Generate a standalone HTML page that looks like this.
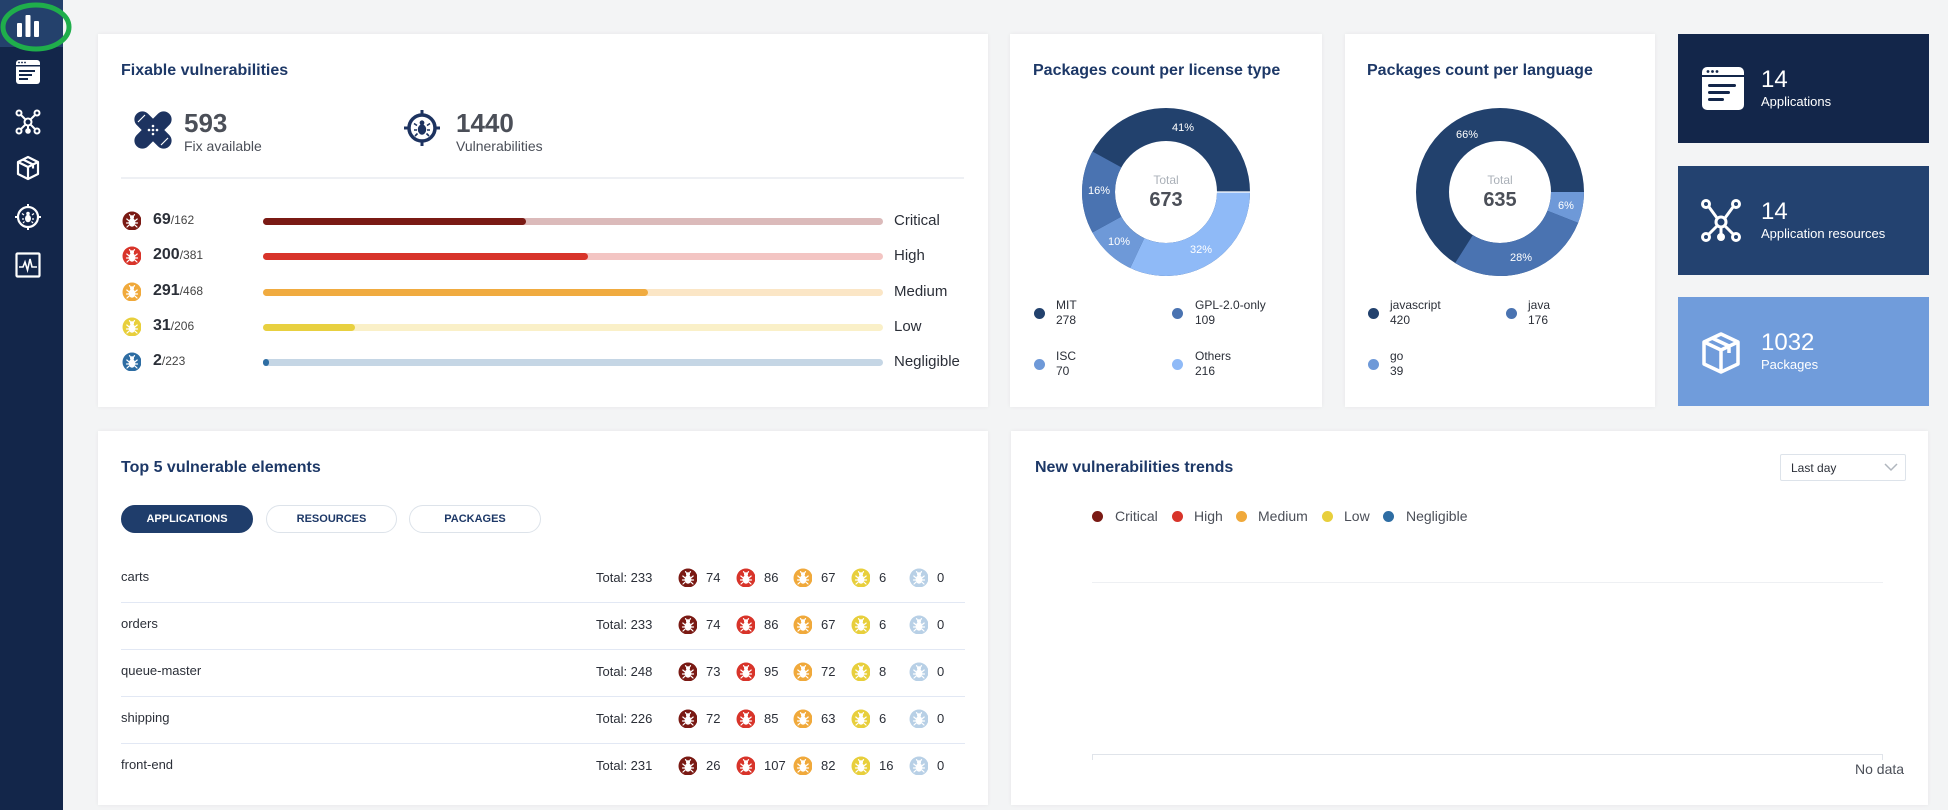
<!DOCTYPE html>
<html><head><meta charset="utf-8"><style>
*{box-sizing:border-box;margin:0;padding:0}
body{width:1948px;height:810px;background:#f3f4f5;font-family:"Liberation Sans",sans-serif;position:relative;overflow:hidden;color:#2b2f38}
.a{position:absolute}
.card{position:absolute;background:#fff;box-shadow:0 0 4px rgba(0,0,0,.06)}
.title{position:absolute;font-size:16px;font-weight:bold;color:#1d3867;white-space:nowrap}
.sev{position:absolute;width:19px;height:19px}
.bar{position:absolute;height:7px;border-radius:4px}
.lbl{position:absolute;font-size:15px;color:#2b2f38}
.num{position:absolute;font-size:16px;font-weight:bold;color:#2b2f38}
.num small{font-size:12px;font-weight:normal;color:#444}
.row{position:absolute;font-size:13px;color:#2b2f38}
.btn{position:absolute;height:28px;border-radius:14px;border:1px solid #dde3ea;font-size:11px;font-weight:bold;color:#1d3867;text-align:center;line-height:26px}
.dl{position:absolute;width:11px;height:11px;border-radius:50%}
.lt{position:absolute;font-size:12px;line-height:15px;color:#2b2f38}
.tile{position:absolute;left:1678px;width:251px;height:109px}
.tn{position:absolute;left:83px;top:32px;font-size:24px;color:#fff}
.tl{position:absolute;left:83px;top:60px;font-size:13px;color:#fff}
</style></head><body>
<svg width="0" height="0" style="position:absolute"><defs>
<g id="bug"><circle cx="10" cy="10" r="9.5" fill="currentColor"/>
<g fill="#fff"><ellipse cx="10" cy="11.5" rx="3.4" ry="4.2"/><circle cx="10" cy="6.3" r="2"/></g>
<g stroke="#fff" stroke-width="1.2" fill="none" stroke-linecap="round"><path d="M6.6 9.5 4.8 8M13.4 9.5 15.2 8M6.5 12H4.5M13.5 12h2M6.8 14.3 5 16M13.2 14.3 15 16M8.5 5 7.5 3.6M11.5 5l1-1.4"/></g></g>
</defs></svg>

<!-- sidebar -->
<div class="a" style="left:0;top:0;width:63px;height:810px;background:#13264a"></div>
<div class="a" style="left:0;top:0;width:63px;height:47px;background:#24416c"></div>
<svg class="a" style="left:0;top:0" width="76" height="56"><ellipse cx="36" cy="27" rx="33" ry="22" fill="none" stroke="#1fae4b" stroke-width="5"/></svg>
<svg class="a" style="left:15px;top:14px" width="26" height="24"><rect x="2" y="9" width="5" height="14" rx="1" fill="#fff"/><rect x="10.5" y="1" width="5" height="22" rx="1" fill="#fff"/><rect x="19" y="7" width="5" height="16" rx="1" fill="#fff"/></svg>
<svg class="a" style="left:15px;top:59px" width="26" height="26"><rect x="1" y="1" width="24" height="24" rx="3" fill="#fff"/><rect x="1" y="6" width="24" height="1.5" fill="#13264a"/><circle cx="4" cy="3.5" r=".9" fill="#13264a"/><circle cx="7" cy="3.5" r=".9" fill="#13264a"/><circle cx="10" cy="3.5" r=".9" fill="#13264a"/><rect x="4" y="11" width="16" height="2" fill="#13264a"/><rect x="4" y="15" width="13" height="2" fill="#13264a"/><rect x="4" y="19" width="9" height="2" fill="#13264a"/></svg>
<svg class="a" style="left:15px;top:109px" width="26" height="26" fill="none" stroke="#fff" stroke-width="2"><circle cx="13" cy="13" r="3.5"/><circle cx="4" cy="4" r="2.5"/><circle cx="22" cy="4" r="2.5"/><circle cx="4" cy="22" r="2.5"/><circle cx="22" cy="22" r="2.5"/><circle cx="13" cy="22" r="1.8" fill="#fff"/><path d="M6 6l4.5 4.5M20 6l-4.5 4.5M6 20l4.5-4.5M20 20l-4.5-4.5M13 16.5v4"/></svg>
<svg class="a" style="left:16px;top:155px" width="24" height="26" fill="none" stroke="#fff" stroke-width="2.2" stroke-linejoin="round"><path d="M12 2 22 7v12l-10 5-10-5V7z"/><path d="M2 7l10 5 10-5M12 12v12M7 4.5l10 5v4"/></svg>
<svg class="a" style="left:15px;top:204px" width="26" height="26"><circle cx="13" cy="13" r="10" fill="none" stroke="#fff" stroke-width="2.2"/><path d="M13 0v4M13 22v4M0 13h4M22 13h4" stroke="#fff" stroke-width="2"/><ellipse cx="13" cy="14.5" rx="3" ry="3.8" fill="#fff"/><circle cx="13" cy="9.5" r="1.8" fill="#fff"/><path d="M9 11l-2-1.5M17 11l2-1.5M9 15H7M17 15h2M9.5 17.5 8 19M16.5 17.5 18 19" stroke="#fff" stroke-width="1.2"/></svg>
<svg class="a" style="left:15px;top:252px" width="26" height="26" fill="none" stroke="#fff" stroke-width="2.2"><rect x="1.5" y="1.5" width="23" height="23" rx="1"/><path d="M4 15h4l2-5 2.5 8 2.5-11 2 8h5" stroke-width="1.6"/></svg>

<!-- card 1 -->
<div class="card" style="left:98px;top:34px;width:890px;height:373px"></div>
<div class="title" style="left:121px;top:62px">Fixable vulnerabilities</div>
<svg class="a" style="left:132px;top:109px" width="42" height="42"><g transform="rotate(45 21 21)" fill="#1d3360"><rect x="13" y="-2" width="16" height="46" rx="8"/><rect x="-2" y="13" width="46" height="16" rx="8"/></g><g stroke="#fff" stroke-width="1.2"><path d="M6 13 13 6M29 36 36 29"/></g><g fill="#fff"><circle cx="21" cy="17" r="1.3"/><circle cx="21" cy="25" r="1.3"/><circle cx="17" cy="21" r="1.3"/><circle cx="25" cy="21" r="1.3"/><circle cx="21" cy="21" r="1.3"/></g></svg>
<div class="a" style="left:184px;top:108px;font-size:26px;font-weight:bold;color:#4b4f58">593</div>
<div class="a" style="left:184px;top:138px;font-size:14px;color:#4b4f58">Fix available</div>
<svg class="a" style="left:404px;top:110px" width="36" height="36"><circle cx="18" cy="18" r="13" fill="none" stroke="#1d3360" stroke-width="3.5"/><path d="M18 0v6M18 30v6M0 18h6M30 18h6" stroke="#1d3360" stroke-width="3"/><ellipse cx="18" cy="19.5" rx="4.2" ry="5.2" fill="#1d3360"/><circle cx="18" cy="12.8" r="2.4" fill="#1d3360"/><path d="M13 15.5l-3-2M23 15.5l3-2M13 20h-3M23 20h3M13.5 23.5 11 26M22.5 23.5 25 26" stroke="#1d3360" stroke-width="1.6"/></svg>
<div class="a" style="left:456px;top:108px;font-size:26px;font-weight:bold;color:#4b4f58">1440</div>
<div class="a" style="left:456px;top:138px;font-size:14px;color:#4b4f58">Vulnerabilities</div>
<div class="a" style="left:121px;top:177px;width:843px;height:2px;background:#eef0f4"></div>

<svg class="sev" style="left:122px;top:211px;color:#7a1a14"><use href="#bug"/></svg>
<div class="num" style="left:153px;top:211px">69<small>/162</small></div>
<div class="bar" style="left:263px;top:218px;width:620px;background:#dbbaba"></div>
<div class="bar" style="left:263px;top:218px;width:263px;background:#7a1a14"></div>
<div class="lbl" style="left:894px;top:212px">Critical</div>

<svg class="sev" style="left:122px;top:246px;color:#d8342a"><use href="#bug"/></svg>
<div class="num" style="left:153px;top:246px">200<small>/381</small></div>
<div class="bar" style="left:263px;top:253px;width:620px;background:#f3c5c3"></div>
<div class="bar" style="left:263px;top:253px;width:325px;background:#d8342a"></div>
<div class="lbl" style="left:894px;top:247px">High</div>

<svg class="sev" style="left:122px;top:282px;color:#f0a93b"><use href="#bug"/></svg>
<div class="num" style="left:153px;top:282px">291<small>/468</small></div>
<div class="bar" style="left:263px;top:289px;width:620px;background:#fbe6c6"></div>
<div class="bar" style="left:263px;top:289px;width:385px;background:#f0ab40"></div>
<div class="lbl" style="left:894px;top:283px">Medium</div>

<svg class="sev" style="left:122px;top:317px;color:#e8cf3c"><use href="#bug"/></svg>
<div class="num" style="left:153px;top:317px">31<small>/206</small></div>
<div class="bar" style="left:263px;top:324px;width:620px;background:#faf0c8"></div>
<div class="bar" style="left:263px;top:324px;width:92px;background:#e8d040"></div>
<div class="lbl" style="left:894px;top:318px">Low</div>

<svg class="sev" style="left:122px;top:352px;color:#2e6da3"><use href="#bug"/></svg>
<div class="num" style="left:153px;top:352px">2<small>/223</small></div>
<div class="bar" style="left:263px;top:359px;width:620px;background:#c5d6e5"></div>
<div class="bar" style="left:263px;top:359px;width:6px;background:#2e6da3"></div>
<div class="lbl" style="left:894px;top:353px">Negligible</div>

<!-- card 2 -->
<div class="card" style="left:1010px;top:34px;width:312px;height:373px"></div>
<div class="title" style="left:1033px;top:62px">Packages count per license type</div>
<svg class="a" style="left:1066px;top:92px" width="200" height="200">
<g transform="translate(100 100)" fill="none" stroke-width="33">
<circle r="67.5" stroke="#22416d"/>
<circle r="67.5" stroke="#8fbaf7" stroke-dasharray="135.7 1000"/>
<circle r="67.5" stroke="#6e99d8" stroke-dasharray="42.4 1000" transform="rotate(115.2)"/>
<circle r="67.5" stroke="#4a73b1" stroke-dasharray="67.9 1000" transform="rotate(151.2)"/>
</g>
<g stroke="#fff" stroke-width="1.2"><path d="M184 100H150M100 100"/></g>
<g font-size="11" fill="#fff" text-anchor="middle" font-family="Liberation Sans"><text x="117" y="39">41%</text><text x="33" y="102">16%</text><text x="53" y="153">10%</text><text x="135" y="161">32%</text></g>
<text x="100" y="92" font-size="12" fill="#aab0b8" text-anchor="middle" font-family="Liberation Sans">Total</text>
<text x="100" y="114" font-size="20" font-weight="bold" fill="#4b4f58" text-anchor="middle" font-family="Liberation Sans">673</text>
</svg>
<div class="dl" style="left:1034px;top:308px;background:#22416d"></div><div class="lt" style="left:1056px;top:298px">MIT<br>278</div>
<div class="dl" style="left:1172px;top:308px;background:#4a73b1"></div><div class="lt" style="left:1195px;top:298px">GPL-2.0-only<br>109</div>
<div class="dl" style="left:1034px;top:359px;background:#6e99d8"></div><div class="lt" style="left:1056px;top:349px">ISC<br>70</div>
<div class="dl" style="left:1172px;top:359px;background:#8fbaf7"></div><div class="lt" style="left:1195px;top:349px">Others<br>216</div>

<!-- card 3 -->
<div class="card" style="left:1345px;top:34px;width:310px;height:373px"></div>
<div class="title" style="left:1367px;top:62px">Packages count per language</div>
<svg class="a" style="left:1400px;top:92px" width="200" height="200">
<g transform="translate(100 100)" fill="none" stroke-width="33">
<circle r="67.5" stroke="#22416d"/>
<circle r="67.5" stroke="#6e99d8" stroke-dasharray="25.4 1000"/>
<circle r="67.5" stroke="#4a73b1" stroke-dasharray="118.5 1000" transform="rotate(21.6)"/>
</g>
<g font-size="11" fill="#fff" text-anchor="middle" font-family="Liberation Sans"><text x="67" y="46">66%</text><text x="166" y="117">6%</text><text x="121" y="169">28%</text></g>
<text x="100" y="92" font-size="12" fill="#aab0b8" text-anchor="middle" font-family="Liberation Sans">Total</text>
<text x="100" y="114" font-size="20" font-weight="bold" fill="#4b4f58" text-anchor="middle" font-family="Liberation Sans">635</text>
</svg>
<div class="dl" style="left:1368px;top:308px;background:#22416d"></div><div class="lt" style="left:1390px;top:298px">javascript<br>420</div>
<div class="dl" style="left:1506px;top:308px;background:#4a73b1"></div><div class="lt" style="left:1528px;top:298px">java<br>176</div>
<div class="dl" style="left:1368px;top:359px;background:#6e99d8"></div><div class="lt" style="left:1390px;top:349px">go<br>39</div>

<!-- tiles -->
<div class="tile" style="top:34px;background:#13264a">
<svg class="a" style="left:24px;top:33px" width="42" height="43"><rect x="0" y="0" width="42" height="43" rx="5" fill="#fff"/><rect x="0" y="8" width="42" height="2" fill="#13264a"/><circle cx="6" cy="4.5" r="1.4" fill="#13264a"/><circle cx="10.5" cy="4.5" r="1.4" fill="#13264a"/><circle cx="15" cy="4.5" r="1.4" fill="#13264a"/><rect x="6" y="17" width="28" height="3" rx="1.5" fill="#13264a"/><rect x="6" y="24" width="22" height="3" rx="1.5" fill="#13264a"/><rect x="6" y="31" width="16" height="3" rx="1.5" fill="#13264a"/></svg>
<div class="tn">14</div><div class="tl">Applications</div></div>
<div class="tile" style="top:166px;background:#234270">
<svg class="a" style="left:23px;top:32px" width="40" height="44" fill="none" stroke="#fff" stroke-width="3"><circle cx="20" cy="24" r="5"/><circle cx="5" cy="6" r="3.5"/><circle cx="35" cy="6" r="3.5"/><circle cx="5" cy="39" r="3.5"/><circle cx="35" cy="39" r="3.5"/><circle cx="20" cy="39" r="2.5" fill="#fff"/><path d="M8 9l8 11M32 9l-8 11M8 36l8-8M32 36l-8-8M20 29v8"/></svg>
<div class="tn">14</div><div class="tl">Application resources</div></div>
<div class="tile" style="top:297px;background:#709cdb">
<svg class="a" style="left:23px;top:34px" width="40" height="44" fill="none" stroke="#fff" stroke-width="3.5" stroke-linejoin="round"><path d="M20 3 37 11v22L20 41 3 33V11z"/><path d="M3 11l17 8 17-8M20 19v22M11 7l17 8v7"/></svg>
<div class="tn">1032</div><div class="tl">Packages</div></div>

<!-- card 4 -->
<div class="card" style="left:98px;top:431px;width:890px;height:374px"></div>
<div class="title" style="left:121px;top:459px">Top 5 vulnerable elements</div>
<div class="btn" style="left:121px;top:505px;width:132px;background:#1f3d6b;border-color:#1f3d6b;color:#fff">APPLICATIONS</div>
<div class="btn" style="left:266px;top:505px;width:131px">RESOURCES</div>
<div class="btn" style="left:409px;top:505px;width:132px">PACKAGES</div>

<div class="row" style="left:121px;top:569px">carts</div>
<div class="row" style="left:121px;top:616px">orders</div>
<div class="row" style="left:121px;top:663px">queue-master</div>
<div class="row" style="left:121px;top:710px">shipping</div>
<div class="row" style="left:121px;top:757px">front-end</div>
<div class="a" style="left:121px;top:602px;width:844px;height:1px;background:#e2e8f4"></div>
<div class="a" style="left:121px;top:649px;width:844px;height:1px;background:#e2e8f4"></div>
<div class="a" style="left:121px;top:696px;width:844px;height:1px;background:#e2e8f4"></div>
<div class="a" style="left:121px;top:743px;width:844px;height:1px;background:#e2e8f4"></div>

<!-- card 5 -->
<div class="card" style="left:1011px;top:431px;width:917px;height:374px"></div>
<div class="title" style="left:1035px;top:459px">New vulnerabilities trends</div>
<div class="a" style="left:1780px;top:454px;width:126px;height:27px;border:1px solid #dde3ea;border-radius:2px;font-size:12px;padding:6px 0 0 10px">Last day</div>
<svg class="a" style="left:1884px;top:463px" width="14" height="9"><path d="M1 1l6 6 6-6" fill="none" stroke="#b0b6be" stroke-width="1.5"/></svg>
<div class="dl" style="left:1092px;top:511px;background:#7a1a14"></div><div class="a" style="left:1115px;top:508px;font-size:14px;color:#4b4f58">Critical</div>
<div class="dl" style="left:1172px;top:511px;background:#d8342a"></div><div class="a" style="left:1194px;top:508px;font-size:14px;color:#4b4f58">High</div>
<div class="dl" style="left:1236px;top:511px;background:#f0a93b"></div><div class="a" style="left:1258px;top:508px;font-size:14px;color:#4b4f58">Medium</div>
<div class="dl" style="left:1322px;top:511px;background:#e8cf3c"></div><div class="a" style="left:1344px;top:508px;font-size:14px;color:#4b4f58">Low</div>
<div class="dl" style="left:1383px;top:511px;background:#2e6da3"></div><div class="a" style="left:1406px;top:508px;font-size:14px;color:#4b4f58">Negligible</div>
<div class="a" style="left:1092px;top:582px;width:791px;height:1px;background:#eef0f3"></div>
<div class="a" style="left:1092px;top:754px;width:791px;height:1px;background:#e0e4ea"></div>
<div class="a" style="left:1092px;top:754px;width:1px;height:6px;background:#e0e4ea"></div>
<div class="a" style="left:1882px;top:754px;width:1px;height:6px;background:#e0e4ea"></div>
<div class="a" style="left:1855px;top:761px;font-size:14px;color:#4b4f58">No data</div>

<!-- table rows -->
<div class="row" style="left:596px;top:570px">Total: 233</div>
<div class="row" style="left:596px;top:617px">Total: 233</div>
<div class="row" style="left:596px;top:664px">Total: 248</div>
<div class="row" style="left:596px;top:711px">Total: 226</div>
<div class="row" style="left:596px;top:758px">Total: 231</div>

<svg class="sev" style="left:678px;top:568px;color:#7a1a14"><use href="#bug"/></svg><div class="row" style="left:706px;top:570px">74</div>
<svg class="sev" style="left:736px;top:568px;color:#d8342a"><use href="#bug"/></svg><div class="row" style="left:764px;top:570px">86</div>
<svg class="sev" style="left:793px;top:568px;color:#f0a93b"><use href="#bug"/></svg><div class="row" style="left:821px;top:570px">67</div>
<svg class="sev" style="left:851px;top:568px;color:#e8cf3c"><use href="#bug"/></svg><div class="row" style="left:879px;top:570px">6</div>
<svg class="sev" style="left:909px;top:568px;color:#b8d0e6"><use href="#bug"/></svg><div class="row" style="left:937px;top:570px">0</div>

<svg class="sev" style="left:678px;top:615px;color:#7a1a14"><use href="#bug"/></svg><div class="row" style="left:706px;top:617px">74</div>
<svg class="sev" style="left:736px;top:615px;color:#d8342a"><use href="#bug"/></svg><div class="row" style="left:764px;top:617px">86</div>
<svg class="sev" style="left:793px;top:615px;color:#f0a93b"><use href="#bug"/></svg><div class="row" style="left:821px;top:617px">67</div>
<svg class="sev" style="left:851px;top:615px;color:#e8cf3c"><use href="#bug"/></svg><div class="row" style="left:879px;top:617px">6</div>
<svg class="sev" style="left:909px;top:615px;color:#b8d0e6"><use href="#bug"/></svg><div class="row" style="left:937px;top:617px">0</div>

<svg class="sev" style="left:678px;top:662px;color:#7a1a14"><use href="#bug"/></svg><div class="row" style="left:706px;top:664px">73</div>
<svg class="sev" style="left:736px;top:662px;color:#d8342a"><use href="#bug"/></svg><div class="row" style="left:764px;top:664px">95</div>
<svg class="sev" style="left:793px;top:662px;color:#f0a93b"><use href="#bug"/></svg><div class="row" style="left:821px;top:664px">72</div>
<svg class="sev" style="left:851px;top:662px;color:#e8cf3c"><use href="#bug"/></svg><div class="row" style="left:879px;top:664px">8</div>
<svg class="sev" style="left:909px;top:662px;color:#b8d0e6"><use href="#bug"/></svg><div class="row" style="left:937px;top:664px">0</div>

<svg class="sev" style="left:678px;top:709px;color:#7a1a14"><use href="#bug"/></svg><div class="row" style="left:706px;top:711px">72</div>
<svg class="sev" style="left:736px;top:709px;color:#d8342a"><use href="#bug"/></svg><div class="row" style="left:764px;top:711px">85</div>
<svg class="sev" style="left:793px;top:709px;color:#f0a93b"><use href="#bug"/></svg><div class="row" style="left:821px;top:711px">63</div>
<svg class="sev" style="left:851px;top:709px;color:#e8cf3c"><use href="#bug"/></svg><div class="row" style="left:879px;top:711px">6</div>
<svg class="sev" style="left:909px;top:709px;color:#b8d0e6"><use href="#bug"/></svg><div class="row" style="left:937px;top:711px">0</div>

<svg class="sev" style="left:678px;top:756px;color:#7a1a14"><use href="#bug"/></svg><div class="row" style="left:706px;top:758px">26</div>
<svg class="sev" style="left:736px;top:756px;color:#d8342a"><use href="#bug"/></svg><div class="row" style="left:764px;top:758px">107</div>
<svg class="sev" style="left:793px;top:756px;color:#f0a93b"><use href="#bug"/></svg><div class="row" style="left:821px;top:758px">82</div>
<svg class="sev" style="left:851px;top:756px;color:#e8cf3c"><use href="#bug"/></svg><div class="row" style="left:879px;top:758px">16</div>
<svg class="sev" style="left:909px;top:756px;color:#b8d0e6"><use href="#bug"/></svg><div class="row" style="left:937px;top:758px">0</div>
</body></html>
